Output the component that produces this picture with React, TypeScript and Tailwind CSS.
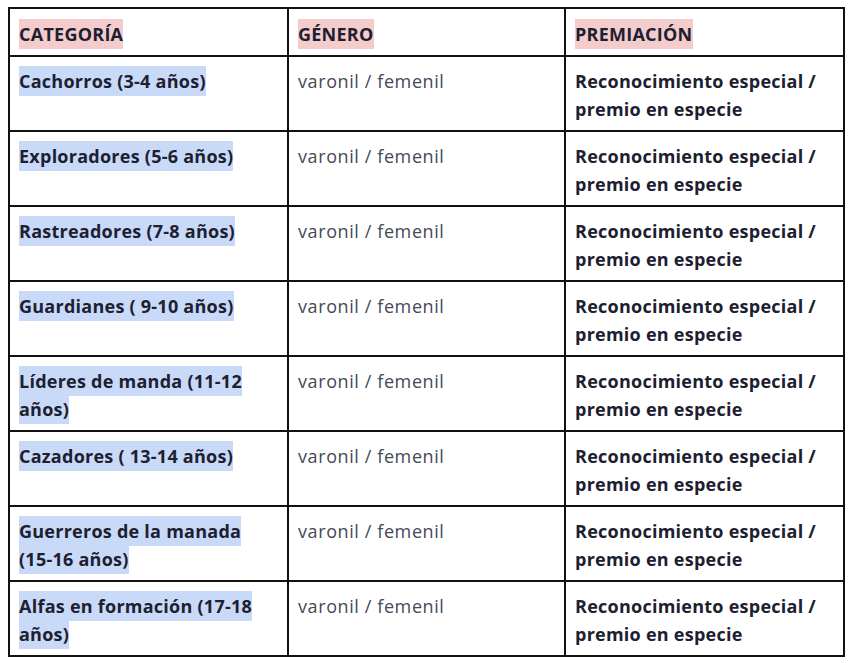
const rows = [
  "Cachorros (3-4 años)",
  "Exploradores (5-6 años)",
  "Rastreadores (7-8 años)",
  "Guardianes ( 9-10 años)",
  "Líderes de manda (11-12 años)",
  "Cazadores ( 13-14 años)",
  "Guerreros de la manada (15-16 años)",
  "Alfas en formación (17-18 años)",
];

const Mark = ({ children, color }: { children: React.ReactNode; color: string }) => (
  <span className={`${color} py-[3px] box-decoration-clone`}>{children}</span>
);

const App = () => {
  return (
    <div className="w-[850px] h-[659px] bg-white pt-[7px] pl-[8px] font-['Open_Sans','Liberation_Sans',sans-serif] text-[18px] leading-[28px] tracking-[0.25px]">
      <table className="border-collapse w-[837px] table-fixed">
        <colgroup>
          <col className="w-[279px]" />
          <col className="w-[277px]" />
          <col className="w-[279px]" />
        </colgroup>
        <thead>
          <tr className="h-[48px]">
            {["CATEGORÍA", "GÉNERO", "PREMIACIÓN"].map((h) => (
              <th key={h} className="border-2 border-[#111] text-left align-top pt-[11px] pb-[7px] px-[9px] font-bold text-[#1c2030]">
                <Mark color="bg-[#f4cccc]">{h}</Mark>
              </th>
            ))}
          </tr>
        </thead>
        <tbody>
          {rows.map((r) => (
            <tr key={r} className="h-[75px]">
              <td className="border-2 border-[#111] align-top pt-[10px] px-[9px] font-bold text-[#1c2030]">
                <Mark color="bg-[#c9daf8]">{r}</Mark>
              </td>
              <td className="border-2 border-[#111] align-top pt-[10px] px-[9px] text-[#434a58] tracking-[0.6px]">
                varonil / femenil
              </td>
              <td className="border-2 border-[#111] align-top pt-[10px] px-[9px] font-bold text-[#1c2030]">
                Reconocimiento especial / premio en especie
              </td>
            </tr>
          ))}
        </tbody>
      </table>
    </div>
  );
};

export default App;
